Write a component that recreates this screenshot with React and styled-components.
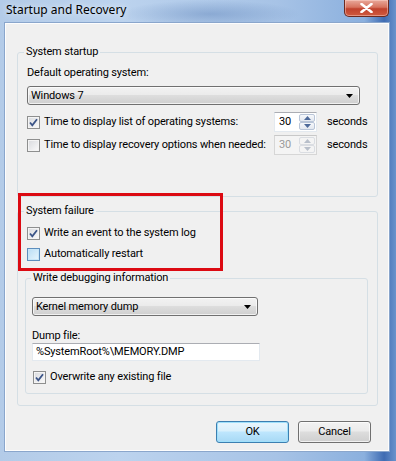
import styled, { createGlobalStyle } from "styled-components";

const GlobalStyle = createGlobalStyle`
  html, body { margin: 0; padding: 0; background: #ffffff; }
  body {
    font-family: Roboto, "Noto Sans", sans-serif;
    font-size: 11px;
    letter-spacing: -0.15px;
    color: #000;
  }
`;

function CheckMark() {
  return (
    <svg width="11" height="11" viewBox="0 0 11 11">
      <path d="M2 5.5 L4.3 8.3 L9 2.2" fill="none" stroke="#3b5487" strokeWidth="1.8" />
    </svg>
  );
}

function Check({ checked, hot, children }) {
  return (
    <CheckRow>
      <Box $hot={hot}>{checked && <CheckMark />}</Box>
      <CheckText>{children}</CheckText>
    </CheckRow>
  );
}

function Spin({ value, disabled }) {
  const arrow = disabled ? "#b8bfca" : "#4e6a9a";
  return (
    <SpinBox $disabled={disabled}>
      <SpinValue $disabled={disabled}>{value}</SpinValue>
      <SpinButtons>
        <SpinButton $disabled={disabled}>
          <svg width="7" height="4" viewBox="0 0 7 4"><path d="M0 4 L3.5 0 L7 4 Z" fill={arrow} /></svg>
        </SpinButton>
        <SpinButton $disabled={disabled}>
          <svg width="7" height="4" viewBox="0 0 7 4"><path d="M0 0 L3.5 4 L7 0 Z" fill={arrow} /></svg>
        </SpinButton>
      </SpinButtons>
    </SpinBox>
  );
}

function Combo({ width, top, children }) {
  return (
    <Select $w={width} $mt={top}>
      <span>{children}</span>
      <svg width="7" height="4" viewBox="0 0 7 4"><path d="M0 0 L7 0 L3.5 4 Z" fill="#000" /></svg>
    </Select>
  );
}

export default function App() {
  return (
    <>
      <GlobalStyle />
      <Window>
        <TitleBar>
          <Title>Startup and Recovery</Title>
          <CloseButton>
            <svg width="13" height="10" viewBox="0 0 13 10">
              <path d="M1.5 1 L11.5 9 M11.5 1 L1.5 9" stroke="#ffffff" strokeWidth="2.6" strokeLinecap="round" />
            </svg>
          </CloseButton>
        </TitleBar>

        <Client>
          <Group $mt={20} $ml={11} $w={361} $pt={5} $pb={41} $pl={9}>
            <Legend $shift={-3}>System startup</Legend>
            <FieldLabel>Default operating system:</FieldLabel>
            <Combo width={333} top={5}>Windows 7</Combo>
            <SpinRow $mt={7}>
              <Check checked>Time to display list of operating systems:</Check>
              <Spin value="30" />
              <Unit>seconds</Unit>
            </SpinRow>
            <SpinRow $mt={3}>
              <Check>Time to display recovery options when needed:</Check>
              <Spin value="30" disabled />
              <Unit>seconds</Unit>
            </SpinRow>
          </Group>

          <Group $mt={6} $ml={11} $w={361} $pt={4} $pb={11} $pl={9}>
            <Legend $shift={-3}>System failure</Legend>
            <Check checked>Write an event to the system log</Check>
            <Gap />
            <Check hot>Automatically restart</Check>
            <Group $mt={6} $ml={-2} $w={343} $pt={11} $pb={6} $pl={6}>
              <Legend $shift={-1}>Write debugging information</Legend>
              <Combo width={226} top={0}>Kernel memory dump</Combo>
              <FieldLabel $mt={13} $lh={14}>Dump file:</FieldLabel>
              <TextInput>%SystemRoot%\MEMORY.DMP</TextInput>
              <CheckWrap>
                <Check checked>Overwrite any existing file</Check>
              </CheckWrap>
            </Group>
          </Group>

          <Buttons>
            <Button $default>OK</Button>
            <Button>Cancel</Button>
          </Buttons>

          <Highlight />
        </Client>
      </Window>
    </>
  );
}

const Window = styled.div`
  width: 396px;
  height: 461px;
  display: flex;
  flex-direction: column;
  background:
    radial-gradient(ellipse 90px 14px at 210px 14px, rgba(70, 110, 170, 0.35), transparent),
    linear-gradient(to right, #b3cbe8 0%, #bcd3ee 30%, #a7c3e6 70%, #8bb0de 92%, #3f6cb3 97%, #6a93cc 100%);
`;

const TitleBar = styled.div`
  height: 23px;
  display: flex;
  justify-content: space-between;
  align-items: flex-start;
`;

const Title = styled.div`
  padding: 2px 0 0 6px;
  line-height: 16px;
  font-family: "Noto Sans", sans-serif;
  font-size: 12px;
  letter-spacing: 0;
  color: #000;
  text-shadow: 0 0 6px rgba(255, 255, 255, 0.9);
`;

const CloseButton = styled.div`
  width: 45px;
  height: 17px;
  margin-right: 7px;
  box-sizing: border-box;
  border: 1px solid #6b2a20;
  border-top: none;
  border-radius: 0 0 5px 5px;
  background: linear-gradient(#e9a99b 0%, #d7735f 45%, #c0422d 55%, #cf5a3f 100%);
  display: flex;
  align-items: center;
  justify-content: center;
  box-shadow: inset 0 0 0 1px rgba(255, 220, 210, 0.45);
`;

const Client = styled.div`
  position: relative;
  flex: 1;
  margin: 0 7px 10px 5px;
  background: #f0f0f0;
  border: 1px solid #fdfdfd;
  outline: 1px solid #8aa6cc;
  display: flex;
  flex-direction: column;
`;

const Group = styled.fieldset`
  margin: ${(p) => p.$mt}px 0 0 ${(p) => p.$ml}px;
  width: ${(p) => p.$w}px;
  box-sizing: border-box;
  min-width: 0;
  border: 1px solid #d5dfe5;
  border-radius: 3px;
  padding: ${(p) => p.$pt}px 8px ${(p) => p.$pb}px ${(p) => p.$pl}px;
  display: flex;
  flex-direction: column;
  align-items: flex-start;
`;

const Legend = styled.legend`
  padding: 0 2px;
  margin-left: ${(p) => p.$shift}px;
  line-height: 16px;
  height: 16px;
`;

const Highlight = styled.div`
  position: absolute;
  left: 12px;
  top: 169px;
  width: 205px;
  height: 78px;
  box-sizing: border-box;
  border: 3px solid #dc0a12;
  pointer-events: none;
`;

const FieldLabel = styled.div`
  margin-top: ${(p) => p.$mt || 0}px;
  line-height: ${(p) => p.$lh || 16}px;
  height: ${(p) => p.$lh || 16}px;
`;

const Select = styled.div`
  margin-top: ${(p) => p.$mt}px;
  width: ${(p) => p.$w}px;
  height: 19px;
  box-sizing: border-box;
  border: 1px solid #707070;
  border-radius: 3px;
  background: linear-gradient(#f2f2f2 0%, #ebebeb 45%, #dddddd 50%, #cfcfcf 100%);
  box-shadow: inset 0 0 0 1px rgba(255, 255, 255, 0.7);
  display: flex;
  align-items: center;
  justify-content: space-between;
  padding: 0 6px 0 3px;
  line-height: 16px;
`;

const SpinRow = styled.div`
  margin-top: ${(p) => p.$mt}px;
  height: 20px;
  display: grid;
  grid-template-columns: 247px 43px auto;
  align-items: center;
`;

const CheckRow = styled.div`
  height: 20px;
  display: flex;
  align-items: center;
  gap: 4px;
  white-space: nowrap;
`;

const Box = styled.div`
  width: 13px;
  height: 13px;
  box-sizing: border-box;
  border: 1px solid ${(p) => (p.$hot ? "#5d8ebd" : "#8e8f8f")};
  background: ${(p) =>
    p.$hot
      ? "linear-gradient(135deg, #b9ddf5, #e9f6fd)"
      : "linear-gradient(135deg, #d8dade, #fbfbfb)"};
  box-shadow: inset 0 0 0 1px ${(p) => (p.$hot ? "#c8e6f8" : "#f4f4f4")};
  display: flex;
  align-items: center;
  justify-content: center;
`;

const CheckText = styled.span`
  line-height: 16px;
`;

const Gap = styled.div`
  height: 1px;
`;

const SpinBox = styled.div`
  width: 43px;
  height: 20px;
  box-sizing: border-box;
  border: 1px solid ${(p) => (p.$disabled ? "#d6d6d6" : "#e3e9ef")};
  border-top-color: ${(p) => (p.$disabled ? "#c8c8c8" : "#abadb3")};
  background: ${(p) => (p.$disabled ? "#f4f4f4" : "#ffffff")};
  display: flex;
  align-items: stretch;
`;

const SpinValue = styled.span`
  flex: 1;
  padding-left: 4px;
  line-height: 18px;
  color: ${(p) => (p.$disabled ? "#9a9a9a" : "#000")};
`;

const SpinButtons = styled.div`
  width: 16px;
  display: flex;
  flex-direction: column;
  padding: 1px 1px 1px 0;
`;

const SpinButton = styled.div`
  flex: 1;
  box-sizing: border-box;
  border: 1px solid ${(p) => (p.$disabled ? "#dadde2" : "#b9c5d8")};
  border-radius: 2px;
  background: ${(p) =>
    p.$disabled ? "#f4f4f4" : "linear-gradient(#f6f8fb, #e3e8f0)"};
  display: flex;
  align-items: center;
  justify-content: center;
`;

const Unit = styled.span`
  margin-left: 10px;
  line-height: 16px;
`;

const TextInput = styled.div`
  width: 228px;
  height: 18px;
  box-sizing: border-box;
  border: 1px solid #e3e9ef;
  border-top-color: #abadb3;
  background: #ffffff;
  padding-left: 3px;
  line-height: 16px;
`;

const CheckWrap = styled.div`
  margin-top: 6px;
  margin-left: 1px;
`;

const Buttons = styled.div`
  margin-top: 15px;
  padding-right: 17px;
  display: flex;
  justify-content: flex-end;
  gap: 9px;
`;

const Button = styled.div`
  width: 73px;
  height: 22px;
  box-sizing: border-box;
  border: 1px solid ${(p) => (p.$default ? "#3c7fb1" : "#707070")};
  border-radius: 3px;
  background: ${(p) =>
    p.$default
      ? "linear-gradient(#eaf6fd 0%, #d9f0fc 45%, #bee6fd 50%, #a7d9f5 100%)"
      : "linear-gradient(#f2f2f2 0%, #ebebeb 45%, #dddddd 50%, #cfcfcf 100%)"};
  box-shadow: inset 0 0 0 1px ${(p) => (p.$default ? "#9fe0fb" : "rgba(255,255,255,0.7)")};
  display: flex;
  align-items: center;
  justify-content: center;
  line-height: 16px;
`;
